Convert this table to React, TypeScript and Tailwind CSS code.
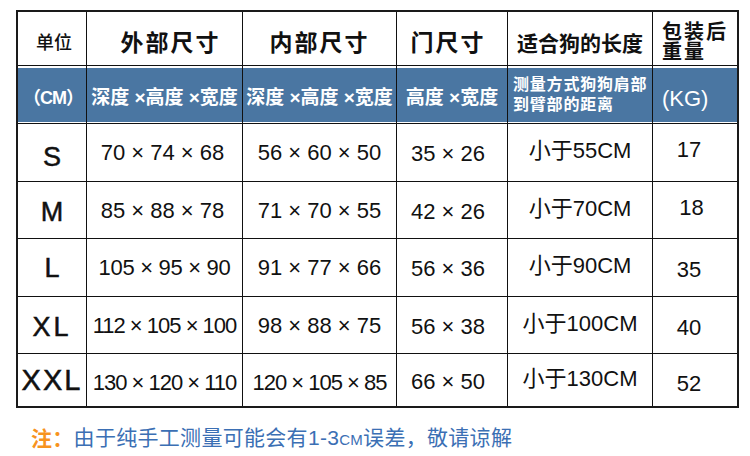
import React from 'react';

const font = { fontFamily: '"Liberation Sans", "Noto Sans CJK SC", sans-serif' };

type Row = {
  size: string;
  sizeClass: string;
  outer: string;
  outerClass: string;
  inner: string;
  innerClass: string;
  door: string;
  dog: string;
  kg: string;
  kgClass: string;
};

const rows: Row[] = [
  { size: 'S', sizeClass: 'pt-[9px]', outer: '70 × 74 × 68', outerClass: 'pr-[4px]', inner: '56 × 60 × 50', innerClass: '', door: '35 × 26', dog: '小于55CM', kg: '17', kgClass: 'pb-[6px]' },
  { size: 'M', sizeClass: 'pt-[4px]', outer: '85 × 88 × 78', outerClass: 'pr-[4px]', inner: '71 × 70 × 55', innerClass: '', door: '42 × 26', dog: '小于70CM', kg: '18', kgClass: 'pb-[6px] pl-[5px]' },
  { size: 'L', sizeClass: 'pt-[2px]', outer: '105 × 95 × 90', outerClass: 'tracking-[-0.3px]', inner: '91 × 77 × 66', innerClass: '', door: '56 × 36', dog: '小于90CM', kg: '35', kgClass: 'pt-[4px]' },
  { size: 'XL', sizeClass: 'pt-[4px] tracking-[3px]', outer: '112 × 105 × 100', outerClass: 'tracking-[-1px]', inner: '98 × 88 × 75', innerClass: '', door: '56 × 38', dog: '小于100CM', kg: '40', kgClass: 'pt-[4px]' },
  { size: 'XXL', sizeClass: 'pt-[2px] tracking-[2px] text-[29px]', outer: '130 × 120 × 110', outerClass: 'tracking-[-1px] pt-[4px]', inner: '120 × 105 × 85', innerClass: 'tracking-[-1px] pt-[4px]', door: '66 × 50', dog: '小于130CM', kg: '52', kgClass: 'pt-[6px]' },
];

const cell = 'flex items-center justify-center border-r border-b border-[#111] whitespace-nowrap';
const band = 'h-full bg-[#4a76a2] text-white flex items-center';

export default function App() {
  return (
    <div className="w-[750px] h-[456px] bg-white overflow-hidden" style={font}>
      <div className="ml-[16px] pt-[10px]">
        <div className="w-[723px] border-2 border-[#1a1a1a] grid grid-cols-[69px_156px_154px_111px_145px_84px] grid-rows-[54px_58px_58px_57px_58px_57px_52px] text-[#111]">
          {/* header */}
          <div className={`${cell} pt-[10px] pl-[4px] text-[18px] font-medium`}>单位</div>
          <div className={`${cell} pt-[10px] pl-[12px] text-[23px] font-bold tracking-[2px]`}>外部尺寸</div>
          <div className={`${cell} pt-[10px] text-[23px] font-bold tracking-[2px]`}>内部尺寸</div>
          <div className={`${cell} pt-[10px] pr-[8px] text-[23px] font-bold tracking-[2px]`}>门尺寸</div>
          <div className={`${cell} pt-[10px] text-[21px] font-bold`}>适合狗的长度</div>
          <div className="flex flex-col justify-center pl-[9px] pt-[6px] border-b border-[#111] text-[20px] font-bold leading-[20px] tracking-[2px]">
            <span>包装后</span>
            <span>重量</span>
          </div>

          {/* blue band */}
          <div className="border-r border-b border-[#111] pt-[2px] pb-[1px]">
            <div className={`${band} justify-center pt-[6px] pl-[2px] text-[18px] font-bold tracking-[-1px]`}>（CM）</div>
          </div>
          <div className="border-r border-b border-[#111] pt-[2px] pb-[1px]">
            <div className={`${band} justify-center pt-[6px] text-[19px] font-bold whitespace-nowrap`}>深度 ×高度 ×宽度</div>
          </div>
          <div className="border-r border-b border-[#111] pt-[2px] pb-[1px]">
            <div className={`${band} justify-center pt-[6px] text-[19px] font-bold whitespace-nowrap`}>深度 ×高度 ×宽度</div>
          </div>
          <div className="border-r border-b border-[#111] pt-[2px] pb-[1px]">
            <div className={`${band} justify-center pt-[6px] text-[19px] font-bold whitespace-nowrap`}>高度 ×宽度</div>
          </div>
          <div className="border-r border-b border-[#111] pt-[2px] pb-[1px]">
            <div className="h-full bg-[#4a76a2] text-white flex flex-col justify-center pl-[5px] text-[16px] font-bold leading-[20px] tracking-[0.8px]">
              <span>测量方式狗狗肩部</span>
              <span>到臂部的距离</span>
            </div>
          </div>
          <div className="border-b border-[#111] pt-[2px] pb-[1px]">
            <div className={`${band} pl-[9px] pt-[6px] text-[22px]`}>(KG)</div>
          </div>

          {/* data rows */}
          {rows.map((r, i) => {
            const last = i === rows.length - 1;
            const b = last ? 'border-b-0' : '';
            return (
              <React.Fragment key={r.size}>
                <div className={`${cell} ${b} text-[27px] [-webkit-text-stroke:0.5px_#111] ${r.sizeClass}`}>{r.size}</div>
                <div className={`${cell} ${b} text-[22px] ${r.outerClass}`}>{r.outer}</div>
                <div className={`${cell} ${b} text-[22px] ${r.innerClass}`}>{r.inner}</div>
                <div className={`${cell} ${b} text-[22px] pr-[8px] pt-[2px]`}>{r.door}</div>
                <div className={`${cell} ${b} text-[22px] pb-[4px]`}>{r.dog}</div>
                <div className={`flex items-center justify-center border-b border-[#111] ${b} text-[22px] pr-[12px] ${r.kgClass}`}>{r.kg}</div>
              </React.Fragment>
            );
          })}
        </div>
        <div className="mt-[17px] ml-[15px] flex items-center text-[21px] leading-[26px] whitespace-nowrap tracking-[0.3px]">
          <span className="text-[#f7931e] font-bold">注：</span>
          <span className="text-[#3b6fb4]">
            由于纯手工测量可能会有1-3<span className="text-[15px]">CM</span>误差，敬请谅解
          </span>
        </div>
      </div>
    </div>
  );
}
